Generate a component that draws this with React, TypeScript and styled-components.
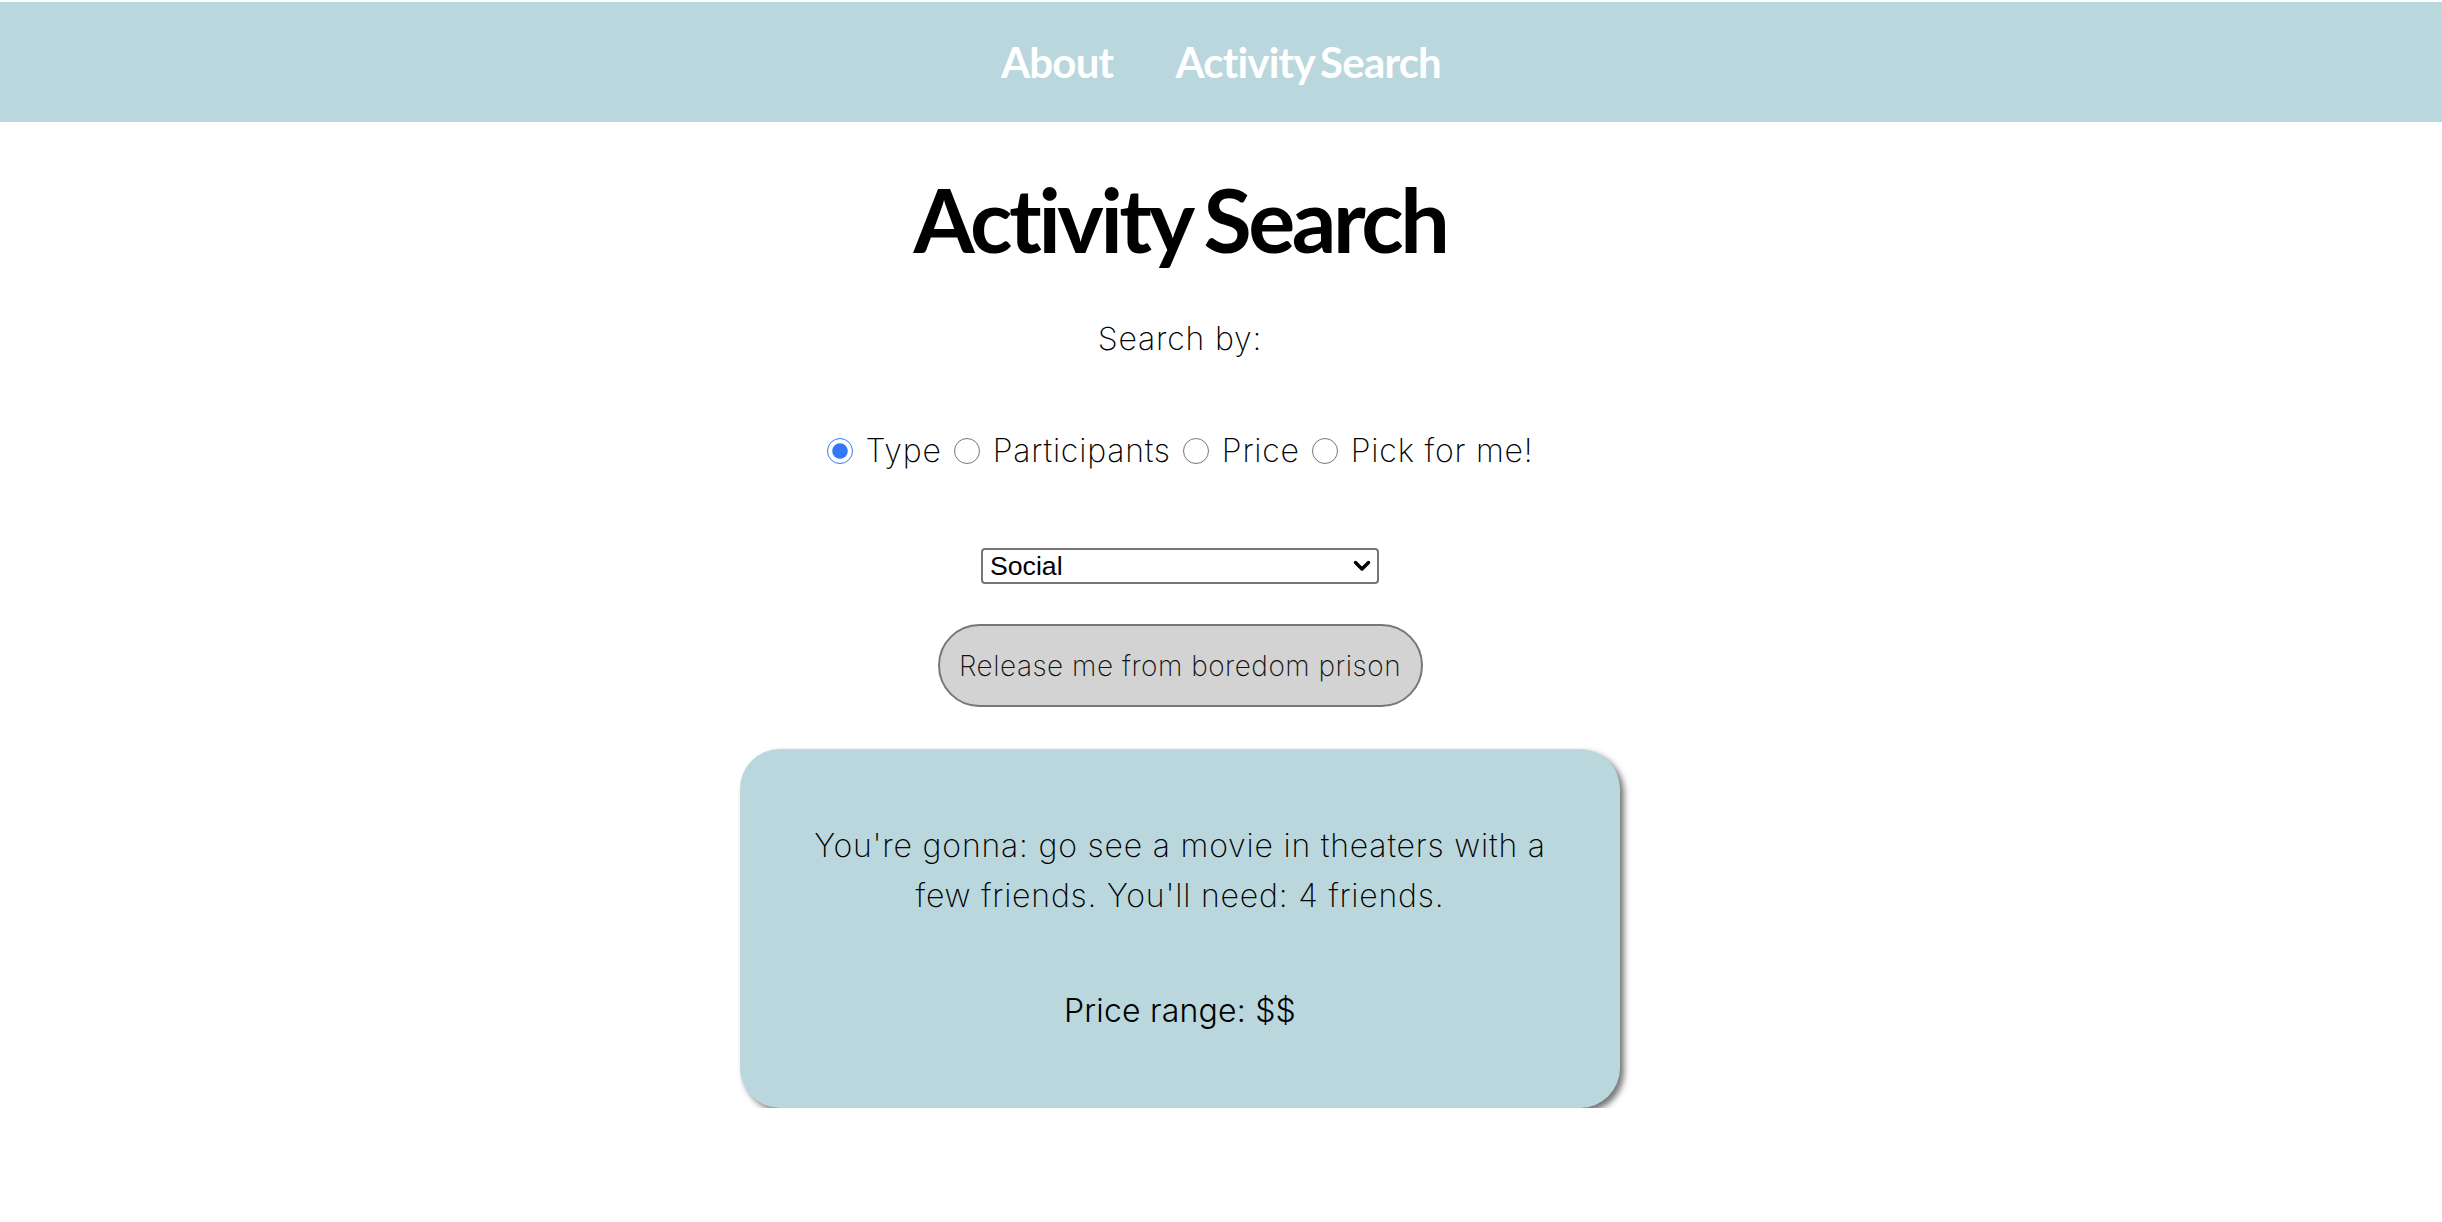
import styled, { createGlobalStyle } from "styled-components";

const GlobalStyle = createGlobalStyle`
  body {
    margin: 0;
    padding-top: 2px;
    background: #ffffff;
    font-family: Inter, "Open Sans", sans-serif;
    font-weight: 250;
    letter-spacing: 0.8px;
    color: #000;
  }
`;

const NavBar = styled.nav`
  height: 120px;
  background: #bad7de;
  display: flex;
  justify-content: center;
  align-items: center;
  gap: 62px;
`;
const NavLink = styled.a`
  font-family: Lato, sans-serif;
  font-weight: 700;
  font-size: 42px;
  letter-spacing: -0.8px;
  word-spacing: -3px;
  color: #ffffff;
  text-decoration: none;
  line-height: 1;
`;

const Main = styled.main`
  display: flex;
  flex-direction: column;
  align-items: center;
  padding-right: 82px;
`;
const Title = styled.h1`
  font-family: Lato, sans-serif;
  font-weight: 700;
  font-size: 88px;
  line-height: 1;
  margin: 53px 0 0;
  letter-spacing: -3.4px;
  word-spacing: -4px;
`;
const Label = styled.p`
  font-size: 32px;
  line-height: 48px;
  margin: 52px 0 0;
`;
const RadioRow = styled.div`
  display: flex;
  align-items: center;
  gap: 12px;
  margin-top: 64px;
  font-size: 32px;
  line-height: 48px;
`;
const Option = styled.label`
  display: flex;
  align-items: center;
  gap: 13px;
`;
const Radio = styled.input`
  width: 26px;
  height: 26px;
  margin: 0;
  accent-color: #3478f6;
`;
const SelectBox = styled.div`
  position: relative;
  margin-top: 73px;
  width: 398px;
  height: 36px;
`;
const Select = styled.select`
  appearance: none;
  width: 100%;
  height: 100%;
  font-family: "Liberation Sans", Arial, sans-serif;
  font-size: 26.67px;
  letter-spacing: 0;
  border: 2px solid #767676;
  border-radius: 4px;
  padding: 0 7px;
  background: #fff;
  color: #000;
`;
const Chevron = styled.svg`
  position: absolute;
  right: 8px;
  top: 12px;
  width: 18px;
  height: 12px;
  pointer-events: none;
`;
const Button = styled.button`
  margin-top: 40px;
  width: 485px;
  height: 83px;
  background: #d3d3d3;
  border: 2px solid #777;
  border-radius: 42px;
  font-family: Inter, sans-serif;
  font-weight: 250;
  font-size: 28px;
  letter-spacing: 0.5px;
  color: #111;
`;
const Card = styled.section`
  margin-top: 42px;
  width: 880px;
  box-sizing: border-box;
  padding: 72px 62px;
  background: #bad7de;
  border-radius: 40px;
  box-shadow: 4px 4px 6px rgba(0, 0, 0, 0.55);
  text-align: center;
`;
const Result = styled.p<{ $strong?: boolean }>`
  margin: 0;
  font-size: 32px;
  line-height: 50px;
  font-weight: ${(p) => (p.$strong ? 320 : 250)};
  letter-spacing: ${(p) => (p.$strong ? "0.2px" : "0.8px")};
  & + & {
    margin-top: 65px;
  }
`;

const options = ["Type", "Participants", "Price", "Pick for me!"];

function App() {
  return (
    <>
      <GlobalStyle />
      <NavBar>
        <NavLink href="#">About</NavLink>
        <NavLink href="#">Activity Search</NavLink>
      </NavBar>
      <Main>
        <Title>Activity Search</Title>
        <Label>Search by:</Label>
        <RadioRow>
          {options.map((o, i) => (
            <Option key={o}>
              <Radio type="radio" name="search" defaultChecked={i === 0} />
              {o}
            </Option>
          ))}
        </RadioRow>
        <SelectBox>
          <Select defaultValue="social">
            <option value="education">Education</option>
            <option value="recreational">Recreational</option>
            <option value="social">Social</option>
            <option value="diy">DIY</option>
            <option value="charity">Charity</option>
            <option value="cooking">Cooking</option>
            <option value="relaxation">Relaxation</option>
            <option value="music">Music</option>
            <option value="busywork">Busywork</option>
          </Select>
          <Chevron viewBox="0 0 18 12">
            <path
              d="M2.5 2.5 L9 9 L15.5 2.5"
              fill="none"
              stroke="#000"
              strokeWidth="3.4"
              strokeLinecap="round"
              strokeLinejoin="round"
            />
          </Chevron>
        </SelectBox>
        <Button>Release me from boredom prison</Button>
        <Card>
          <Result>
            You're gonna: go see a movie in theaters with a few friends. You'll
            need: 4 friends.
          </Result>
          <Result $strong>Price range: $$</Result>
        </Card>
      </Main>
    </>
  );
}

export default App;
